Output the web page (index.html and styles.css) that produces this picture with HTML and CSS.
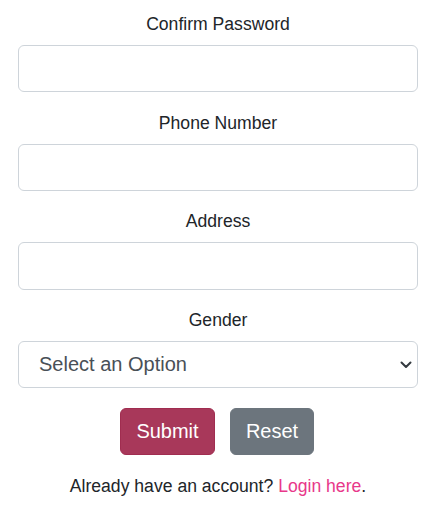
FILE: index.html
```html
<!DOCTYPE html>
<html>
<head>
<meta charset="utf-8">
<link rel="stylesheet" href="styles.css">
</head>
<body>
<form class="form">
  <div class="field">
    <label class="label">Confirm Password</label>
    <input class="control" type="password">
  </div>
  <div class="field">
    <label class="label">Phone Number</label>
    <input class="control" type="text">
  </div>
  <div class="field">
    <label class="label">Address</label>
    <input class="control" type="text">
  </div>
  <div class="field field-last">
    <label class="label">Gender</label>
    <div class="select-wrap">
      <select class="control select">
        <option>Select an Option</option>
      </select>
      <svg class="chevron" width="12" height="8" viewBox="0 0 12 8"><path d="M1.5 1.5 L6 6 L10.5 1.5" fill="none" stroke="#343a40" stroke-width="2" stroke-linecap="round" stroke-linejoin="round"/></svg>
    </div>
  </div>
  <div class="actions">
    <button type="button" class="btn btn-submit">Submit</button>
    <button type="button" class="btn btn-reset">Reset</button>
  </div>
  <p class="footer">Already have an account? <a href="#" class="link">Login here</a>.</p>
</form>
</body>
</html>
```
FILE: styles.css
```css
* { box-sizing: border-box; }
html, body { margin: 0; background: #fff; }
body {
  font-family: "Liberation Sans", Arial, sans-serif;
  font-size: 17.6px;
  line-height: 24px;
  color: #212529;
}
.form {
  padding: 12px 23px 0 18px;
  width: 441px;
}
.field {
  display: flex;
  flex-direction: column;
  margin-bottom: 18.5px;
}
.label {
  display: block;
  text-align: center;
  margin-bottom: 9px;
  height: 24px;
}
.control {
  width: 400px;
  height: 47.2px;
  border: 1px solid #ced4da;
  border-radius: 6px;
  background: #fff;
  font-family: inherit;
  font-size: 20px;
  color: #495057;
  padding: 0 20px;
  outline: none;
}
.select-wrap {
  position: relative;
  width: 400px;
}
.select {
  appearance: none;
  -webkit-appearance: none;
  padding-left: 20px;
  height: 46.5px;
}
.chevron {
  position: absolute;
  right: 6px;
  top: 20px;
  pointer-events: none;
}
.field-last { margin-bottom: 20.4px; }
.actions {
  display: flex;
  justify-content: center;
  gap: 15px;
  padding-right: 2px;
}
.btn {
  height: 47px;
  border-radius: 6px;
  font-family: inherit;
  font-size: 20px;
  color: #fff;
  padding: 0;
  border: 1px solid transparent;
}
.btn-submit { background: #a8385a; border-color: #a02d50; width: 95px; }
.btn-reset { background: #6c757d; border-color: #6c757d; width: 84px; }
.footer {
  margin: 19px 0 0;
  text-align: center;
  line-height: 24px;
}
.link { color: #e8388a; text-decoration: none; }
```
